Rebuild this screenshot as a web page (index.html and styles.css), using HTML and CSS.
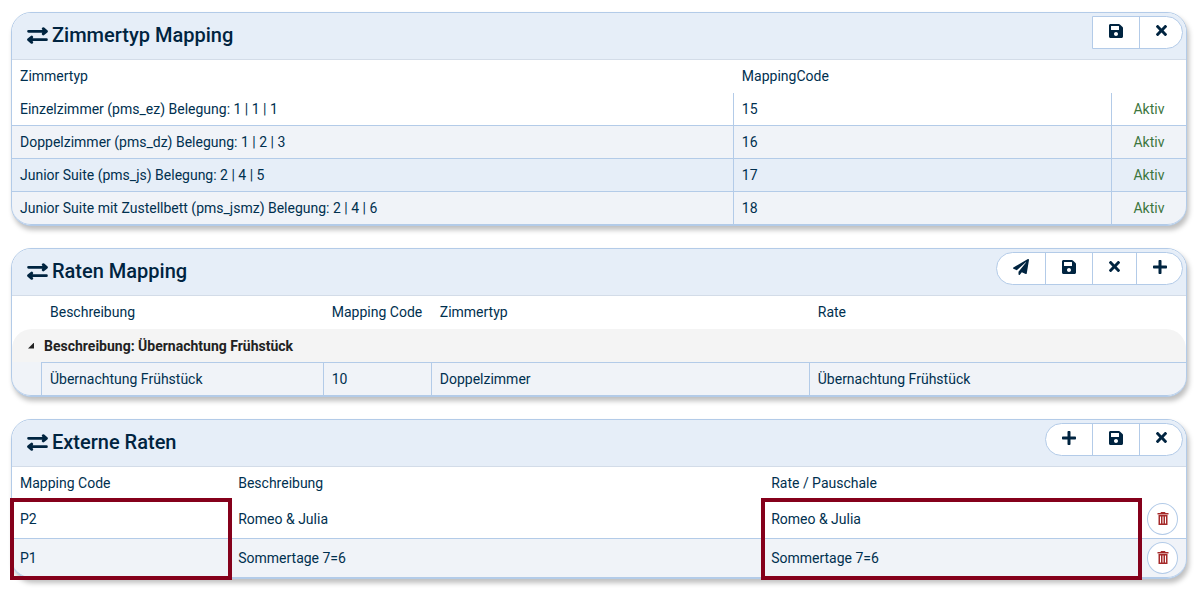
FILE: index.html
```
<!DOCTYPE html>
<html lang="de">
<head>
    <meta charset="UTF-8">
    <meta name="viewport" content="width=device-width, initial-scale=1.0">
    <title>Mapping</title>
    <link rel="stylesheet" href="styles.css">
</head>
<body>
    <!-- icon set -->
    <svg class="icon-set" aria-hidden="true">
        <symbol id="i-exchange" viewBox="0 0 20 16">
            <path d="M1.500 4H18M15.500 1.500L18.500 4l-3 2.500M18.500 12H2M4.500 9.500L1.500 12l3 2.500" fill="none" stroke="currentColor" stroke-width="2.700" stroke-linecap="round" stroke-linejoin="round"/>
        </symbol>
        <symbol id="i-save" viewBox="0 32 448 448">
            <path fill="currentColor" d="M433.941 129.941l-83.882-83.882A48 48 0 0 0 316.118 32H48C21.490 32 0 53.490 0 80v352c0 26.510 21.490 48 48 48h352c26.510 0 48-21.490 48-48V163.882a48 48 0 0 0-14.059-33.941zM224 416c-35.346 0-64-28.654-64-64 0-35.346 28.654-64 64-64s64 28.654 64 64c0 35.346-28.654 64-64 64zm96-304.520V212c0 6.627-5.373 12-12 12H76c-6.627 0-12-5.373-12-12V108c0-6.627 5.373-12 12-12h228.520c3.183 0 6.235 1.264 8.485 3.515l3.480 3.480A11.996 11.996 0 0 1 320 111.480z"/>
        </symbol>
        <symbol id="i-close" viewBox="0 80 352 352">
            <path fill="currentColor" d="M242.720 256l100.070-100.070c12.280-12.280 12.280-32.190 0-44.480l-22.240-22.240c-12.280-12.280-32.190-12.280-44.480 0L176 189.280 75.930 89.210c-12.280-12.280-32.190-12.280-44.480 0L9.210 111.450c-12.280 12.280-12.280 32.190 0 44.480L109.280 256 9.210 356.070c-12.280 12.280-12.280 32.190 0 44.480l22.240 22.240c12.280 12.280 32.200 12.280 44.480 0L176 322.720l100.070 100.070c12.280 12.280 32.200 12.280 44.480 0l22.240-22.240c12.280-12.280 12.280-32.190 0-44.480L242.720 256z"/>
        </symbol>
        <symbol id="i-plus" viewBox="0 32 448 448">
            <path fill="currentColor" d="M416 208H272V64c0-17.670-14.330-32-32-32h-32c-17.670 0-32 14.330-32 32v144H32c-17.670 0-32 14.330-32 32v32c0 17.670 14.330 32 32 32h144v144c0 17.670 14.330 32 32 32h32c17.670 0 32-14.330 32-32V304h144c17.670 0 32-14.330 32-32v-32c0-17.670-14.330-32-32-32z"/>
        </symbol>
        <symbol id="i-send" viewBox="0 0 512 512">
            <path fill="currentColor" d="M476 3.200L12.500 270.600c-18.100 10.400-15.800 35.600 2.200 43.200L121 358.400l287.300-253.200c5.500-4.900 13.300 2.600 8.600 8.300L176 407v80.500c0 23.600 28.500 32.900 42.500 15.800L282 426l124.600 52.200c14.200 6 30.400-2.900 33-18.200l72-432C515 7.800 493.300-6.800 476 3.200z"/>
        </symbol>
        <symbol id="i-trash" viewBox="0 0 12 14">
            <path fill="currentColor" fill-rule="evenodd" d="M.5 1h3L4 0h4l.5 1h3v1.500H.5zM1.500 3h9v10h-9zM3 4.500v7h1v-7zM5.500 4.500v7h1v-7zM8 4.500v7h1v-7z"/>
        </symbol>
    </svg>

    <main>
        <section class="panel">
            <header class="panel-header">
                <h2><svg class="title-icon"><use href="#i-exchange"/></svg>Zimmertyp Mapping</h2>
                <div class="toolbar toolbar-flat">
                    <button type="button" aria-label="Speichern"><svg class="icon"><use href="#i-save"/></svg></button>
                    <button type="button" aria-label="Abbrechen"><svg class="icon icon-close"><use href="#i-close"/></svg></button>
                </div>
            </header>
            <table class="grid">
                <colgroup><col><col class="col-code"><col class="col-status"></colgroup>
                <thead>
                    <tr><th>Zimmertyp</th><th>MappingCode</th><th></th></tr>
                </thead>
                <tbody>
                    <tr><td>Einzelzimmer (pms_ez) Belegung: 1 | 1 | 1</td><td>15</td><td class="status">Aktiv</td></tr>
                    <tr><td>Doppelzimmer (pms_dz) Belegung: 1 | 2 | 3</td><td>16</td><td class="status">Aktiv</td></tr>
                    <tr class="selected"><td>Junior Suite (pms_js) Belegung: 2 | 4 | 5</td><td>17</td><td class="status">Aktiv</td></tr>
                    <tr><td>Junior Suite mit Zustellbett (pms_jsmz) Belegung: 2 | 4 | 6</td><td>18</td><td class="status">Aktiv</td></tr>
                </tbody>
            </table>
        </section>

        <section class="panel">
            <header class="panel-header">
                <h2><svg class="title-icon"><use href="#i-exchange"/></svg>Raten Mapping</h2>
                <div class="toolbar">
                    <button type="button" aria-label="Senden"><svg class="icon icon-send"><use href="#i-send"/></svg></button>
                    <button type="button" aria-label="Speichern"><svg class="icon"><use href="#i-save"/></svg></button>
                    <button type="button" aria-label="Abbrechen"><svg class="icon icon-close"><use href="#i-close"/></svg></button>
                    <button type="button" aria-label="Hinzufügen"><svg class="icon"><use href="#i-plus"/></svg></button>
                </div>
            </header>
            <table class="grid">
                <colgroup><col class="col-indent"><col class="col-desc"><col class="col-mapping"><col class="col-code"><col></colgroup>
                <thead>
                    <tr><th></th><th>Beschreibung</th><th>Mapping Code</th><th>Zimmertyp</th><th>Rate</th></tr>
                </thead>
                <tbody>
                    <tr class="group"><td colspan="5"><div class="group-title"><button type="button" class="toggle" aria-label="Gruppe einklappen"></button>Beschreibung: Übernachtung Frühstück</div></td></tr>
                    <tr><td></td><td>Übernachtung Frühstück</td><td>10</td><td>Doppelzimmer</td><td>Übernachtung Frühstück</td></tr>
                </tbody>
            </table>
        </section>

        <section class="panel">
            <header class="panel-header">
                <h2><svg class="title-icon"><use href="#i-exchange"/></svg>Externe Raten</h2>
                <div class="toolbar">
                    <button type="button" aria-label="Hinzufügen"><svg class="icon"><use href="#i-plus"/></svg></button>
                    <button type="button" aria-label="Speichern"><svg class="icon"><use href="#i-save"/></svg></button>
                    <button type="button" aria-label="Abbrechen"><svg class="icon icon-close"><use href="#i-close"/></svg></button>
                </div>
            </header>
            <table class="grid grid-tall">
                <colgroup><col class="col-ext-code"><col><col class="col-rate"><col class="col-delete"></colgroup>
                <thead>
                    <tr><th>Mapping Code</th><th>Beschreibung</th><th>Rate / Pauschale</th><th></th></tr>
                </thead>
                <tbody>
                    <tr>
                        <td class="marked">P2</td>
                        <td>Romeo &amp; Julia</td>
                        <td class="marked">Romeo &amp; Julia</td>
                        <td class="actions"><button type="button" class="delete" aria-label="Löschen"><svg class="trash"><use href="#i-trash"/></svg></button></td>
                    </tr>
                    <tr>
                        <td>P1</td>
                        <td>Sommertage 7=6</td>
                        <td>Sommertage 7=6</td>
                        <td class="actions"><button type="button" class="delete" aria-label="Löschen"><svg class="trash"><use href="#i-trash"/></svg></button></td>
                    </tr>
                </tbody>
            </table>
        </section>
    </main>
</body>
</html>
```
FILE: styles.css
```
:root {
    --text: #00304f;
    --heading: #002440;
    --line: #b3cbe8;
    --header-bg: #e6eef8;
    --row-alt: #f0f3f8;
    --mark: #85001b;
}

*,
*::after {
    box-sizing: border-box;
}

body {
    margin: 0;
    padding: 12px 13px 12px 11px;
    background: #fff;
    color: var(--text);
    font-family: Roboto, sans-serif;
    font-size: 14px;
    line-height: 20px;
}

.icon-set {
    display: none;
}

main {
    display: flex;
    flex-direction: column;
    gap: 22px;
}

.panel {
    border: 1px solid var(--line);
    border-radius: 20px;
    background: #fff;
    box-shadow: 2px 4px 5px rgba(0, 0, 0, 0.25);
}

.panel-header {
    display: flex;
    justify-content: space-between;
    align-items: flex-start;
    height: 47px;
    padding: 3px 3px 0 15px;
    border-bottom: 1px solid #d3dce8;
    border-radius: 19px 19px 0 0;
    background: var(--header-bg);
}

h2 {
    display: flex;
    align-items: center;
    gap: 4px;
    margin: 0;
    color: var(--heading);
    font-size: 20px;
    font-weight: 500;
    line-height: 38px;
}

.title-icon {
    width: 21px;
    height: 17px;
}

/* toolbar */
.toolbar {
    display: flex;
    height: 33px;
    border: 1px solid var(--line);
    border-radius: 17px;
    background: #fff;
}

.toolbar-flat {
    border-radius: 0 17px 17px 0;
}

button {
    padding: 0;
    border: 0;
    background: none;
    color: var(--heading);
    cursor: pointer;
}

.toolbar button {
    display: flex;
    align-items: center;
    padding: 0 16px 4px;
}

.toolbar button + button {
    border-left: 1px solid var(--line);
}

.toolbar button:last-child {
    padding-right: 15px;
}

.icon {
    width: 14px;
    height: 14px;
}

.icon-close {
    width: 11px;
    height: 11px;
}

.icon-send {
    width: 16px;
    height: 16px;
}

/* tables */
.grid {
    width: 100%;
    table-layout: fixed;
    border-collapse: separate;
    border-spacing: 0;
}

.grid th,
.grid td {
    height: 33px;
    padding: 0 8px;
    text-align: left;
    font-weight: 400;
    white-space: nowrap;
}

.grid th {
    padding-bottom: 2px;
}

.grid th + th {
    border-left: 1px solid transparent;
}

.grid td {
    border-bottom: 1px solid var(--line);
}

.grid td + td {
    border-left: 1px solid var(--line);
}

.grid tbody tr:nth-child(even) td {
    background: var(--row-alt);
}

.grid tbody tr.selected td {
    background: var(--header-bg);
}

.grid tr:last-child td:first-child {
    border-bottom-left-radius: 19px;
}

.grid tr:last-child td:last-child {
    border-bottom-right-radius: 19px;
}

.col-code {
    width: 32.2%;
}

.col-status {
    width: 6.4%;
}

.col-indent {
    width: 29px;
}

.col-desc {
    width: 24%;
}

.col-mapping {
    width: 9.2%;
}

.col-ext-code {
    width: 18.5%;
}

.col-rate {
    width: 32.1%;
}

.col-delete {
    width: 47px;
}

.grid .status {
    color: #3c763d;
    text-align: center;
}

/* group row */
.grid .group td {
    border-bottom: 0;
    border-radius: 20px 20px 0 0;
    background: #f4f4f4;
    color: #222;
    font-weight: 700;
}

.grid .group + tr td {
    height: 34px;
}

.grid .group + tr td + td {
    border-top: 1px solid var(--line);
}

.group-title {
    display: flex;
    align-items: center;
    gap: 10px;
    padding-left: 8px;
}

.toggle {
    width: 6px;
    height: 6px;
    background: #222;
    clip-path: polygon(100% 0, 100% 100%, 0 100%);
}

/* external rates */
.grid-tall td {
    height: 39px;
}

.grid td.actions {
    padding: 0 7px;
}

.delete {
    display: flex;
    align-items: center;
    justify-content: center;
    width: 31px;
    height: 32px;
    border: 1px solid var(--line);
    border-radius: 50%;
    background: #fff;
    color: #a52a2a;
}

.trash {
    width: 12px;
    height: 14px;
}

/* frame drawn over both rows of the column */
.marked {
    position: relative;
}

.marked::after {
    content: "";
    position: absolute;
    z-index: 1;
    top: -2px;
    left: -2px;
    right: -3px;
    height: 82px;
    border: 4px solid var(--mark);
    pointer-events: none;
}
```
